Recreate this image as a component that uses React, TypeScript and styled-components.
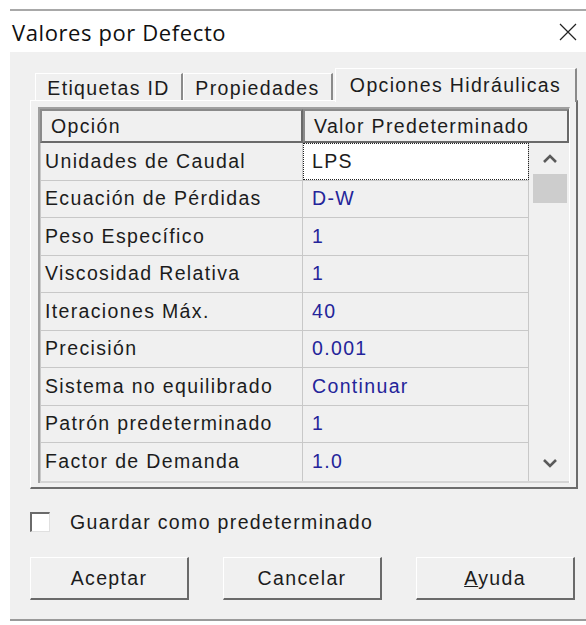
import React from "react";
import styled, { createGlobalStyle } from "styled-components";

const GlobalStyle = createGlobalStyle`
  html, body {
    margin: 0;
    padding: 0;
    background: #ffffff;
  }
`;

const Screen = styled.div`
  width: 586px;
  height: 625px;
  padding-top: 9px;
  box-sizing: border-box;
  background: #ffffff;
  overflow: hidden;
`;

const Window = styled.div`
  margin-left: 10px;
  border-top: 2px solid #a8a8a8;
  border-bottom: 2px solid #9a9a9a;
  background: #f0f0f0;
`;

const TitleBar = styled.div`
  height: 41px;
  background: #ffffff;
  display: flex;
  align-items: center;
  justify-content: space-between;
  padding: 0 8px 0 2px;
`;

const Title = styled.span`
  font-family: "Open Sans", "Noto Sans", sans-serif;
  font-size: 22px;
  color: #101010;
  letter-spacing: 0.6px;
`;

const Body = styled.div`
  padding: 16px 8px 0 20px;
  font-family: "Liberation Sans", Arial, sans-serif;
  font-size: 19.5px;
  letter-spacing: 1.35px;
  color: #1c1c1c;
`;

const TabStrip = styled.div`
  display: flex;
  align-items: flex-end;
  height: 32px;
  padding-left: 5px;
  position: relative;
  z-index: 1;
`;

const Tab = styled.div<{ $active?: boolean; $width: number }>`
  box-sizing: border-box;
  width: ${(p) => p.$width}px;
  height: ${(p) => (p.$active ? 34 : 27)}px;
  margin-bottom: ${(p) => (p.$active ? -2 : 0)}px;
  margin-left: ${(p) => (p.$active ? 2 : 0)}px;
  background: #f0f0f0;
  border-top: 1px solid #ffffff;
  border-left: 1px solid #ffffff;
  border-right: 2px solid #8a8a8a;
  display: flex;
  align-items: center;
  justify-content: center;
  padding-top: ${(p) => (p.$active ? 0 : 2)}px;
  white-space: nowrap;
`;

const Panel = styled.div`
  box-sizing: border-box;
  height: 389px;
  border-top: 1px solid #ffffff;
  border-left: 1px solid #ffffff;
  border-right: 2px solid #6c6c6c;
  border-bottom: 2px solid #6c6c6c;
  padding: 6px 6px 0 7px;
`;

const Grid = styled.div`
  border-left: 2px solid #a0a0a0;
  border-top: 2px solid #a0a0a0;
  border-right: 1px solid #ffffff;
`;

const HeaderRow = styled.div`
  display: flex;
  height: 34px;
`;

const HeaderCell = styled.div<{ $width?: number }>`
  box-sizing: border-box;
  ${(p) => (p.$width ? `width: ${p.$width}px;` : "flex: 1;")}
  border: 2px solid #6a6a6a;
  border-top-color: #8a8a8a;
  border-left-color: #8a8a8a;
  display: flex;
  align-items: center;
  padding-left: 9px;
`;

const GridBody = styled.div`
  display: flex;
  border-bottom: 2px solid #d4d4d4;
`;

const Rows = styled.div`
  width: 489px;
`;

const Row = styled.div`
  display: flex;
  height: 37.5px;
  box-sizing: border-box;
  border-bottom: 1px solid #c8c8c8;
  &:last-child {
    border-bottom: none;
  }
`;

const LabelCell = styled.div`
  box-sizing: border-box;
  width: 263px;
  border-left: 1px solid #c8c8c8;
  border-right: 1px solid #c8c8c8;
  display: flex;
  align-items: center;
  padding-left: 4px;
  white-space: nowrap;
`;

const ValueCell = styled.div<{ $focused?: boolean }>`
  box-sizing: border-box;
  flex: 1;
  border-right: 1px solid #c8c8c8;
  display: flex;
  align-items: center;
  padding-left: 9px;
  color: ${(p) => (p.$focused ? "#1c1c1c" : "#24249a")};
  background: ${(p) => (p.$focused ? "#ffffff" : "transparent")};
  outline: ${(p) => (p.$focused ? "1px dotted #222" : "none")};
  outline-offset: -1px;
`;

const ScrollBar = styled.div`
  flex: 1;
  display: flex;
  flex-direction: column;
  align-items: center;
  padding: 0 2px 0 4px;
`;

const ArrowButton = styled.div<{ $h: number }>`
  height: ${(p) => p.$h}px;
  width: 100%;
  display: flex;
  align-items: center;
  justify-content: center;
`;

const Thumb = styled.div`
  width: 100%;
  height: 29px;
  background: #cdcdcd;
`;

const Track = styled.div`
  flex: 1;
`;

const CheckRow = styled.label`
  display: flex;
  align-items: center;
  gap: 20px;
  margin-top: 22px;
  height: 22px;
`;

const CheckBox = styled.span`
  box-sizing: border-box;
  width: 20px;
  height: 20px;
  background: #ffffff;
  border-top: 2px solid #6a6a6a;
  border-left: 2px solid #6a6a6a;
  border-right: 1px solid #e0e0e0;
  border-bottom: 1px solid #e0e0e0;
`;

const ButtonRow = styled.div`
  display: flex;
  gap: 34px;
  margin-top: 24px;
  padding-bottom: 19px;
`;

const Button = styled.button`
  box-sizing: border-box;
  width: 159px;
  height: 43px;
  background: #f0f0f0;
  font: inherit;
  letter-spacing: inherit;
  color: #1c1c1c;
  border-top: 1px solid #ffffff;
  border-left: 1px solid #ffffff;
  border-right: 2px solid #6a6a6a;
  border-bottom: 2px solid #6a6a6a;
  padding: 0;
`;

const Chevron = ({ down }: { down?: boolean }) => (
  <svg width="16" height="10" viewBox="0 0 16 10">
    <polyline
      points={down ? "2,2 8,8 14,2" : "2,8 8,2 14,8"}
      fill="none"
      stroke="#5a5a5a"
      strokeWidth="2.6"
    />
  </svg>
);

const CloseIcon = () => (
  <svg width="20" height="20" viewBox="0 0 20 20">
    <path d="M2 2 L18 18 M18 2 L2 18" stroke="#222" strokeWidth="1.2" />
  </svg>
);

const options = [
  { label: "Unidades de Caudal", value: "LPS", focused: true },
  { label: "Ecuación de Pérdidas", value: "D-W" },
  { label: "Peso Específico", value: "1" },
  { label: "Viscosidad Relativa", value: "1" },
  { label: "Iteraciones Máx.", value: "40" },
  { label: "Precisión", value: "0.001" },
  { label: "Sistema no equilibrado", value: "Continuar" },
  { label: "Patrón predeterminado", value: "1" },
  { label: "Factor de Demanda", value: "1.0" },
];

export default function App() {
  return (
    <Screen>
      <GlobalStyle />
      <Window>
        <TitleBar>
          <Title>Valores por Defecto</Title>
          <CloseIcon />
        </TitleBar>
        <Body>
          <TabStrip>
            <Tab $width={148}>Etiquetas ID</Tab>
            <Tab $width={150}>Propiedades</Tab>
            <Tab $width={242} $active>
              Opciones Hidráulicas
            </Tab>
          </TabStrip>
          <Panel>
            <Grid>
              <HeaderRow>
                <HeaderCell $width={263}>Opción</HeaderCell>
                <HeaderCell>Valor Predeterminado</HeaderCell>
              </HeaderRow>
              <GridBody>
                <Rows>
                  {options.map((o) => (
                    <Row key={o.label}>
                      <LabelCell>{o.label}</LabelCell>
                      <ValueCell $focused={o.focused}>{o.value}</ValueCell>
                    </Row>
                  ))}
                </Rows>
                <ScrollBar>
                  <ArrowButton $h={31}>
                    <Chevron />
                  </ArrowButton>
                  <Thumb />
                  <Track />
                  <ArrowButton $h={36}>
                    <Chevron down />
                  </ArrowButton>
                </ScrollBar>
              </GridBody>
            </Grid>
          </Panel>
          <CheckRow>
            <CheckBox />
            Guardar como predeterminado
          </CheckRow>
          <ButtonRow>
            <Button>Aceptar</Button>
            <Button>Cancelar</Button>
            <Button>
              <u>A</u>yuda
            </Button>
          </ButtonRow>
        </Body>
      </Window>
    </Screen>
  );
}
